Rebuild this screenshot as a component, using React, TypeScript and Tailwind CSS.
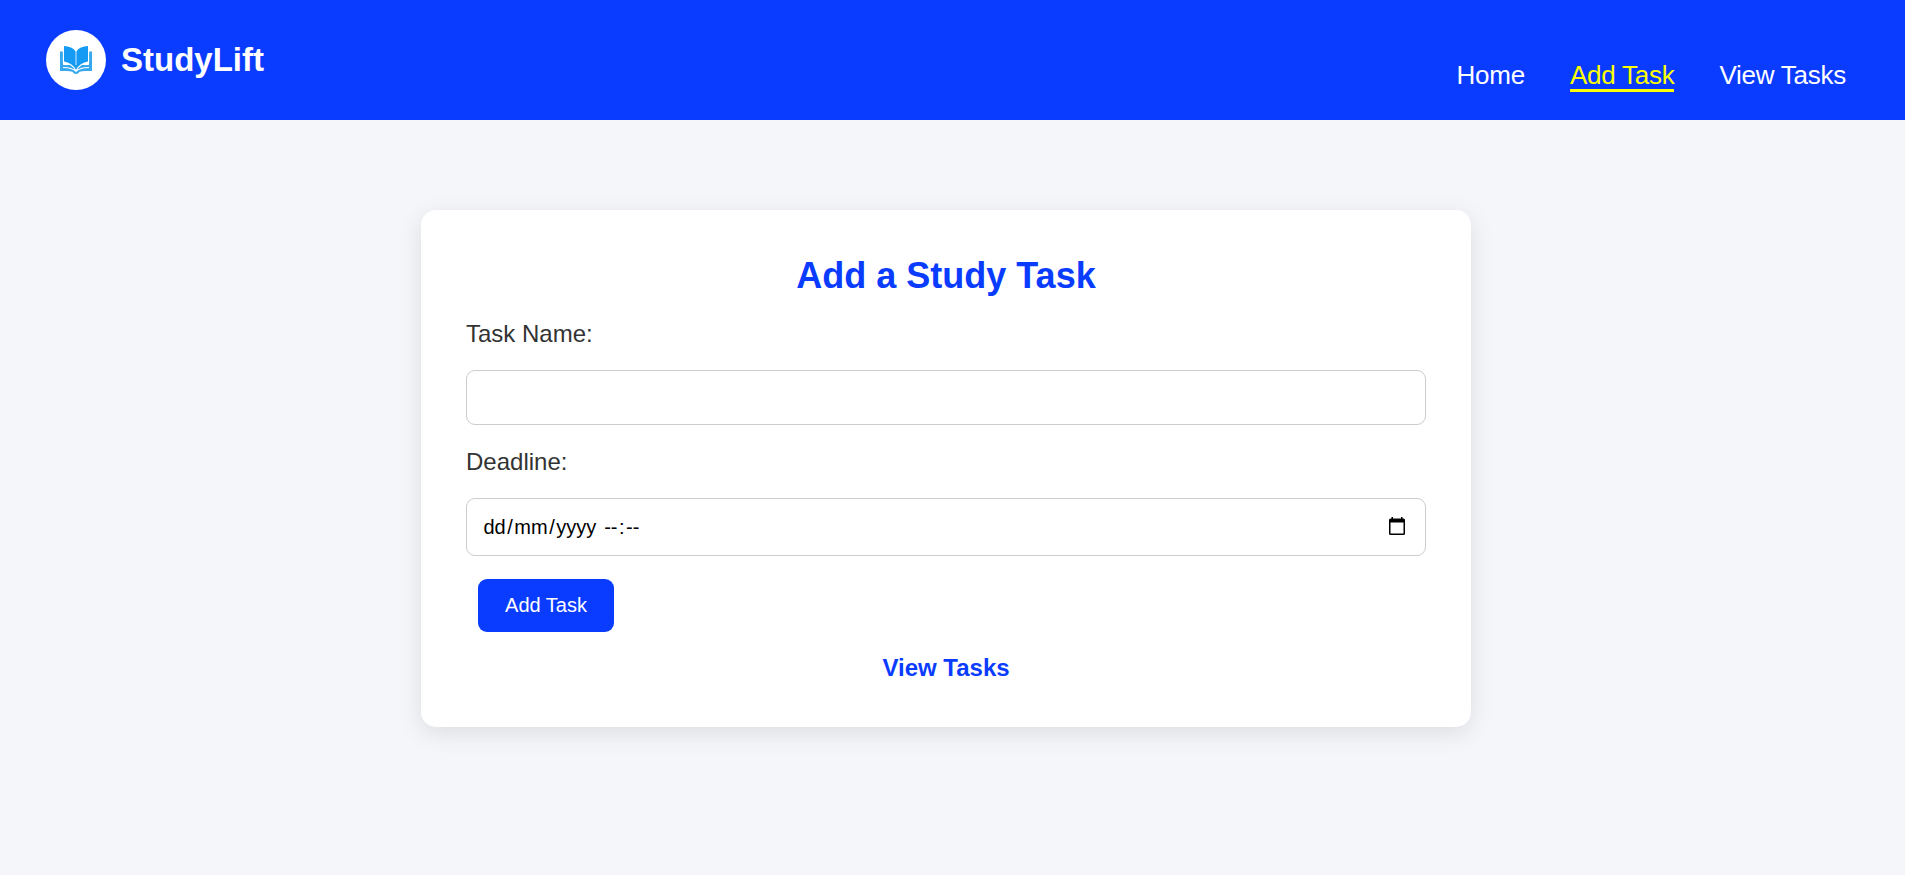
import { useState } from "react";

const NAV_LINKS = ["Home", "Add Task", "View Tasks"];

function BookLogo() {
  return (
    <svg viewBox="0 0 34 30" className="w-[34px] h-[30px]">
      <path d="M1 6.500h3V20h26V6.500h3V26c-5 0-9 0-12.500.8C19.500 28.300 18.500 29 17 29s-2.500-.7-3.500-2.200C10 26 6 26 1 26z" fill="#35a8ee" />
      <path d="M5 1c5 .3 9.500 1.800 11.600 5.500v19C14 20.500 10 17.500 5 16.500z" fill="#159bf3" />
      <path d="M29 1c-5 .3-9.500 1.800-11.600 5.500v19c2.600-5 6.600-8 11.600-9z" fill="#159bf3" />
      <path d="M4 17c5.500.5 11 4 13 9 2-5 7.500-8.500 13-9M4 22.500c5 0 10 1 13 3.800 3-2.800 8-3.800 13-3.800" fill="none" stroke="#fff" strokeWidth="1.100" />
      <path d="M4.300 6v11M29.700 6v11" stroke="#fff" strokeWidth=".8" />
    </svg>
  );
}

function CalendarIcon() {
  return (
    <svg viewBox="0 0 16 18" className="mb-[2px] h-[18px] w-4">
      <path fillRule="evenodd" d="M2.500 0H4v1.500h8V0h1.500v1.500h1A1.500 1.500 0 0 1 16 3v13.500a1.500 1.500 0 0 1-1.500 1.500h-13A1.500 1.500 0 0 1 0 16.500V3a1.500 1.500 0 0 1 1.500-1.500h1zM1.500 5.500v11h13v-11z" />
    </svg>
  );
}

export default function App() {
  const [taskName, setTaskName] = useState("");

  return (
    <div className="min-h-screen bg-[#f4f6fa] font-['Liberation_Sans',Arial,sans-serif] text-[#333]">
      {/* Header */}
      <header className="flex h-[120px] items-start justify-between bg-[#0a3cff] pt-[30px] pl-[46px] pr-[59px] text-white">
        <div className="flex items-center gap-[15px]">
          <div className="flex h-[60px] w-[60px] items-center justify-center rounded-full bg-white">
            <BookLogo />
          </div>
          <span className="text-[33px] leading-[38px] font-bold">StudyLift</span>
        </div>
        <nav className="flex gap-[45px] pt-[31px]">
          {NAV_LINKS.map((label) => (
            <a
              key={label}
              href="#"
              className={
                label === "Add Task"
                  ? "h-[31px] border-b-3 border-[#ffff00] text-[26px] leading-[29px] tracking-[-0.25px] text-[#ffff00]"
                  : "text-[26px] leading-[29px] tracking-[-0.25px]"
              }
            >
              {label}
            </a>
          ))}
        </nav>
      </header>

      {/* Task form */}
      <main className="mt-[90px] ml-[421px] h-[517px] w-[1050px] rounded-[15px] bg-white px-[45px] pt-[45px] shadow-[0_6px_24px_rgba(0,0,0,0.1)]">
        <h1 className="text-center text-[36px] leading-[41px] font-bold text-[#0a3cff]">Add a Study Task</h1>
        <form onSubmit={(e) => e.preventDefault()}>
          <label htmlFor="task" className="mt-[24px] block text-[24px] leading-[28px]">
            Task Name:
          </label>
          <input
            id="task"
            value={taskName}
            onChange={(e) => setTaskName(e.target.value)}
            className="mt-[22px] block h-[55px] w-full rounded-[9px] border border-[#ccc] px-4 text-[20px]"
          />
          <div className="mt-[23px] text-[24px] leading-[28px]">Deadline:</div>
          <div className="mt-[22px] flex h-[58px] items-center justify-between rounded-[9px] border border-[#ccc] pl-[15px] pr-5 text-black">
            <div className="flex text-[20px]">
              <span className="px-[1.500px]">dd</span>/
              <span className="px-[1.500px]">mm</span>/
              <span className="pl-[1.500px] pr-[8px]">yyyy</span>
              <span className="pr-[1.500px]">--</span>:
              <span className="pl-[1.500px]">--</span>
            </div>
            <CalendarIcon />
          </div>
          <button className="mt-[23px] ml-3 block h-[53px] w-[136px] rounded-[9px] bg-[#0a3cff] pb-[2px] text-[20px] text-white">
            Add Task
          </button>
        </form>
        <a href="#" className="mt-[22px] block text-center text-[24px] leading-[28px] font-bold text-[#0a3cff]">
          View Tasks
        </a>
      </main>
    </div>
  );
}
